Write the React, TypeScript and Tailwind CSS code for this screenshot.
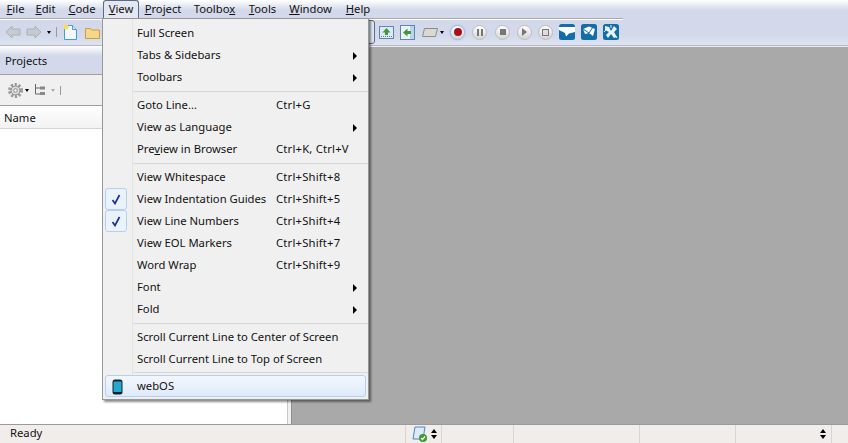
import React from 'react'

const font = "font-['Noto_Sans',sans-serif]"

type Entry =
  | { sep: true }
  | { sep?: false; label: React.ReactNode; keys?: string; arrow?: boolean; checked?: boolean }

const menuTop: { label: string; under: number; width: number }[] = [
  { label: 'File', under: 0, width: 29 },
  { label: 'Edit', under: 0, width: 31 },
  { label: 'Code', under: 0, width: 42 },
  { label: 'View', under: 0, width: 36 },
  { label: 'Project', under: 0, width: 48 },
  { label: 'Toolbox', under: 6, width: 55 },
  { label: 'Tools', under: 0, width: 41 },
  { label: 'Window', under: 0, width: 55 },
  { label: 'Help', under: 0, width: 40 },
]

const entries: Entry[] = [
  { label: 'Full Screen' },
  { label: 'Tabs & Sidebars', arrow: true },
  { label: 'Toolbars', arrow: true },
  { sep: true },
  { label: 'Goto Line...', keys: 'Ctrl+G' },
  { label: 'View as Language', arrow: true },
  { label: <>Pre<span className="underline">v</span>iew in Browser</>, keys: 'Ctrl+K, Ctrl+V' },
  { sep: true },
  { label: 'View Whitespace', keys: 'Ctrl+Shift+8' },
  { label: 'View Indentation Guides', keys: 'Ctrl+Shift+5', checked: true },
  { label: 'View Line Numbers', keys: 'Ctrl+Shift+4', checked: true },
  { label: 'View EOL Markers', keys: 'Ctrl+Shift+7' },
  { label: 'Word Wrap', keys: 'Ctrl+Shift+9' },
  { label: 'Font', arrow: true },
  { label: 'Fold', arrow: true },
  { sep: true },
  { label: 'Scroll Current Line to Center of Screen' },
  { label: 'Scroll Current Line to Top of Screen' },
]

function Arrow({ dir }: { dir: 'left' | 'right' }) {
  return (
    <svg width="16" height="14" viewBox="0 0 16 14">
      <path
        d={dir === 'left' ? 'M1 7 7 1v3h8v6H7v3z' : 'M15 7 9 1v3H1v6h8v3z'}
        fill="#c6cbd2"
        stroke="#aab0b8"
      />
    </svg>
  )
}

function MediaButton({ children, glow }: { children: React.ReactNode; glow?: boolean }) {
  return (
    <div
      className={`flex h-[15px] w-[15px] items-center justify-center rounded-full border bg-gradient-to-b from-white to-[#d4d4d4] ${
        glow ? 'border-[#9db8dc] shadow-[0_0_2px_#9db8dc]' : 'border-[#bcbcbc]'
      }`}
    >
      {children}
    </div>
  )
}

function BlueTile({ children }: { children: React.ReactNode }) {
  return (
    <svg width="16" height="16" viewBox="0 0 16 16">
      <rect width="16" height="16" rx="2.5" fill="#136ea8" />
      {children}
    </svg>
  )
}

function Toolbar() {
  return (
    <div className="flex h-[27px] items-center border-b border-[#b5b7c5]">
      <div className="ml-[5px] flex w-[37px] justify-between">
        <Arrow dir="left" />
        <Arrow dir="right" />
      </div>
      <div className="ml-[5px] h-0 w-0 border-x-[2.5px] border-t-[3px] border-x-transparent border-t-black" />
      <div className="ml-[5px] h-[10px] w-px bg-[#9a9a9a]" />
      <svg className="ml-[6px]" width="15" height="17" viewBox="0 0 15 17">
        <path d="M1.500 1.500h8l4 4v10h-12z" fill="#f2f8fe" stroke="#4a9ad8" />
        <path d="M9.500 1.500v4h4" fill="#cfe4f6" stroke="#4a9ad8" />
        <circle cx="3" cy="3" r="2.500" fill="#f8e04a" />
      </svg>
      <svg className="ml-[7px]" width="15" height="13" viewBox="0 0 15 13">
        <path d="M.5 2.500h5l1 1.500h8v8.500h-14z" fill="#f6d788" stroke="#c9a040" />
      </svg>
      {/* the rest starts under the open menu, only its right end shows */}
      <div className="ml-[253px] flex items-center">
        <div className="h-[24px] w-[22px] rounded-[3px] border border-[#5b6b80] bg-[#dfe7f2]" />
        <svg className="ml-[4px]" width="15" height="13" viewBox="0 0 15 13">
          <rect x=".5" y=".5" width="14" height="12" fill="#dfe9f4" stroke="#5a86b8" />
          <path d="M7.500 2 11.500 6.500H9V9H6V6.500H3.500z" fill="#3f9a3f" />
          <path d="M2 10.500h11" stroke="#777" strokeDasharray="1 1" />
        </svg>
        <svg className="ml-[6px]" width="15" height="15" viewBox="0 0 15 15">
          <rect x=".5" y=".5" width="14" height="14" fill="#eef3f8" stroke="#5a86b8" />
          <rect x="10" y="1" width="4" height="13" fill="#bcd3ea" />
          <path d="M3 7.500 7.500 3.500V6H11v3H7.500v2.500z" fill="#3f9a3f" />
        </svg>
        <svg className="ml-[7px]" width="16" height="9" viewBox="0 0 16 9">
          <path d="M2.500.5h13l-2 8H.5z" fill="#d9d9d4" stroke="#8d8d88" />
        </svg>
        <div className="ml-[2px] h-0 w-0 border-x-[2.5px] border-t-[3px] border-x-transparent border-t-black" />
        <div className="ml-[6px]">
          <MediaButton glow>
            <div className="h-[8px] w-[8px] rounded-full bg-[#a80f1a]" />
          </MediaButton>
        </div>
        <div className="ml-[7px]">
          <MediaButton>
            <div className="flex gap-[2px]">
              <div className="h-[7px] w-[2px] bg-[#777]" />
              <div className="h-[7px] w-[2px] bg-[#777]" />
            </div>
          </MediaButton>
        </div>
        <div className="ml-[8px]">
          <MediaButton>
            <div className="h-[6px] w-[6px] bg-[#777]" />
          </MediaButton>
        </div>
        <div className="ml-[7px]">
          <MediaButton>
            <div className="h-0 w-0 border-y-[4px] border-l-[5px] border-y-transparent border-l-[#777]" />
          </MediaButton>
        </div>
        <div className="ml-[6px]">
          <MediaButton>
            <div className="h-[7px] w-[7px] border border-[#777] bg-[#ddd]" />
          </MediaButton>
        </div>
        <div className="ml-[6px]">
          <BlueTile>
            <path d="M0 3h16v5l-6 1.500-3 3-1-3.500L0 6z" fill="#fff" />
          </BlueTile>
        </div>
        <div className="ml-[6px]">
          <BlueTile>
            <path d="M2 5 8 2.500 14 5l-2 7-4-3-4 1z" fill="#fff" />
            <path d="M2 5l6 4 4-6" stroke="#136ea8" fill="none" />
          </BlueTile>
        </div>
        <div className="ml-[6px]">
          <BlueTile>
            <path d="M2 2l4 1 2 4 3-5 3 3-3 3 3 5-3 1-3-4-3 4-2-3 3-3-4-2z" fill="#e8f4fb" />
            <path d="M8 1v3M12 11l2 3M3 6 1 8" stroke="#e8f4fb" />
          </BlueTile>
        </div>
      </div>
    </div>
  )
}

function ProjectsPane() {
  return (
    <div className="flex w-[287px] flex-col bg-white">
      <div className="flex h-[29px] items-center border-b border-[#a0a0a0] bg-[linear-gradient(#fff_0,#d3d9ea_10px,#d3d9ea_100%)] pl-[5px] pt-[2px] text-[#111]">
        Projects
      </div>
      <div className="flex h-[31px] items-center border-b border-[#a0a0a0] bg-[#f0f0f0] pl-[7px]">
        <svg width="17" height="17" viewBox="0 0 17 17">
          <circle cx="8.500" cy="8.500" r="5.500" fill="none" stroke="#9a9a9a" strokeWidth="4" strokeDasharray="2 1.500" />
          <circle cx="8.500" cy="8.500" r="4.500" fill="#dcdcdc" stroke="#8c8c8c" />
          <circle cx="8.500" cy="8.500" r="1.800" fill="#f4f4f4" stroke="#8c8c8c" />
        </svg>
        <div className="ml-[1px] h-0 w-0 border-x-[2px] border-t-[3px] border-x-transparent border-t-black" />
        <svg className="ml-[5px]" width="11" height="12" viewBox="0 0 11 12">
          <path d="M1.500 0v10H6M1.500 4H6" stroke="#666" fill="none" />
          <rect x="6" y="2.500" width="5" height="3" fill="#888" />
          <rect x="6" y="8" width="5" height="3" fill="#888" />
        </svg>
        <div className="ml-[6px] h-0 w-0 border-x-[2px] border-t-[3px] border-x-transparent border-t-[#aaa]" />
        <div className="ml-[5px] h-[9px] w-px bg-[#9a9a9a]" />
      </div>
      <div className="flex h-[23px] items-center border-b border-[#d5d5d5] bg-gradient-to-b from-white to-[#f2f2f2] pl-[4px] pt-[2px] text-[#111]">
        Name
      </div>
      <div className="flex-1 bg-white" />
    </div>
  )
}

function Spinner() {
  return (
    <div className="ml-[3px] flex flex-col gap-[2px]">
      <div className="h-0 w-0 border-x-[3px] border-b-[4px] border-x-transparent border-b-black" />
      <div className="h-0 w-0 border-x-[3px] border-t-[4px] border-x-transparent border-t-black" />
    </div>
  )
}

function StatusBar() {
  return (
    <div className="flex h-[19px] items-center border-t border-[#9a9a9a] bg-[#f0edeb] text-[#111]">
      <div className="w-[405px] pb-[1px] pl-[10px]">Ready</div>
      <div className="flex h-full w-[36px] items-center border-l border-[#d8d5d3] pl-[6px]">
        <svg width="16" height="16" viewBox="0 0 16 16">
          <path d="M3 1h10l-2 12H1z" fill="#dce9f7" stroke="#4b86c6" />
          <circle cx="11" cy="12" r="4" fill="#3d9a2e" />
          <path d="M9 12l1.500 1.500L13 10.500" stroke="#fff" strokeWidth="1.200" fill="none" />
        </svg>
        <Spinner />
      </div>
      <div className="h-full w-[72px] border-l border-[#d8d5d3]" />
      <div className="h-full w-[126px] border-l border-[#d8d5d3]" />
      <div className="h-full w-[96px] border-l border-[#d8d5d3]" />
      <div className="flex h-full w-[96px] items-center justify-end border-l border-[#d8d5d3] pr-[5px]">
        <Spinner />
      </div>
      <div className="h-full flex-1 border-l border-[#d8d5d3]" />
    </div>
  )
}

function ViewMenu() {
  return (
    <div className="absolute left-[102px] top-[18px] flex h-[382px] w-[267px] flex-col border border-[#979797] bg-[#f0f0f0] pt-[3px] shadow-[2px_2px_2px_rgba(0,0,0,0.45)]">
      <div className="absolute bottom-0 left-[29px] top-0 w-px bg-[#e2e3e3]" />
      {entries.map((e, i) =>
        e.sep ? (
          <div key={i} className="ml-[30px] flex h-[6px] items-center">
            <div className="h-px w-full bg-[#d7d7d7]" />
          </div>
        ) : (
          <div key={i} className="relative flex h-[22px] items-center pl-[34px] pt-[1px] text-[#111]">
            {e.checked && (
              <div className="absolute left-[2px] top-0 flex h-[22px] w-[22px] items-center justify-center rounded-[3px] border border-[#b3d0f2] bg-[#eaf2fb]">
                <svg width="10" height="11" viewBox="0 0 10 11">
                  <path d="M1.500 6 4 9.500 8.500 1" stroke="#1c2f9c" strokeWidth="1.700" fill="none" />
                </svg>
              </div>
            )}
            <span className="w-[139px] whitespace-nowrap">{e.label}</span>
            {e.keys && <span className="whitespace-nowrap tracking-[0.2px]">{e.keys}</span>}
            {e.arrow && (
              <div className="absolute right-[11px] h-0 w-0 border-y-[4px] border-l-[4px] border-y-transparent border-l-black" />
            )}
          </div>
        ),
      )}
      <div className="ml-[30px] flex h-[5px] items-center">
        <div className="h-px w-full bg-[#d7d7d7]" />
      </div>
      <div className="relative mx-[2px] flex h-[22px] items-center rounded-[3px] border border-[#b3d0f2] bg-gradient-to-b from-[#f3f7fc] to-[#dfeafa] pl-[31px] pt-[1px] text-[#111]">
        <svg className="absolute left-[6px]" width="11" height="16" viewBox="0 0 11 16">
          <rect x=".5" y=".5" width="10" height="15" rx="2.500" fill="#16222a" />
          <rect x="1.500" y="2.500" width="8" height="10.500" fill="#23a8d0" />
        </svg>
        webOS
      </div>
    </div>
  )
}

export default function App() {
  return (
    <div className={`relative flex h-[443px] w-[848px] flex-col overflow-hidden bg-[#a9a9a9] text-[11.25px] ${font}`}>
      <div className="bg-[linear-gradient(#fff_0,#d3d9ea_10px,#d3d9ea_35px,#dde2f0_44px)]">
        <div className="flex h-[19px] w-[623px] items-center border-b border-[#a9a9a9] pl-[1px] text-[#111] shadow-[0_1px_0_#fff]">
          {menuTop.map((m) => (
            <div
              key={m.label}
              className={`flex h-[18px] items-center justify-center ${
                m.label === 'View' ? 'rounded-t-[3px] border border-b-0 border-[#5b6b80] bg-[#e4e7f1]' : ''
              }`}
              style={{ width: m.width }}
            >
              <span>
                {m.label.slice(0, m.under)}
                <span className="underline">{m.label[m.under]}</span>
                {m.label.slice(m.under + 1)}
              </span>
            </div>
          ))}
        </div>
        <Toolbar />
      </div>
      <div className="flex min-h-0 flex-1">
        <ProjectsPane />
        <div className="w-[5px] border-x border-l-[#c8c8c8] border-r-[#8f8f8f] bg-[#f0f0f0]" />
        <div className="flex-1 border-t border-[#eceef4] bg-[#a9a9a9]" />
      </div>
      <StatusBar />
      <ViewMenu />
    </div>
  )
}
